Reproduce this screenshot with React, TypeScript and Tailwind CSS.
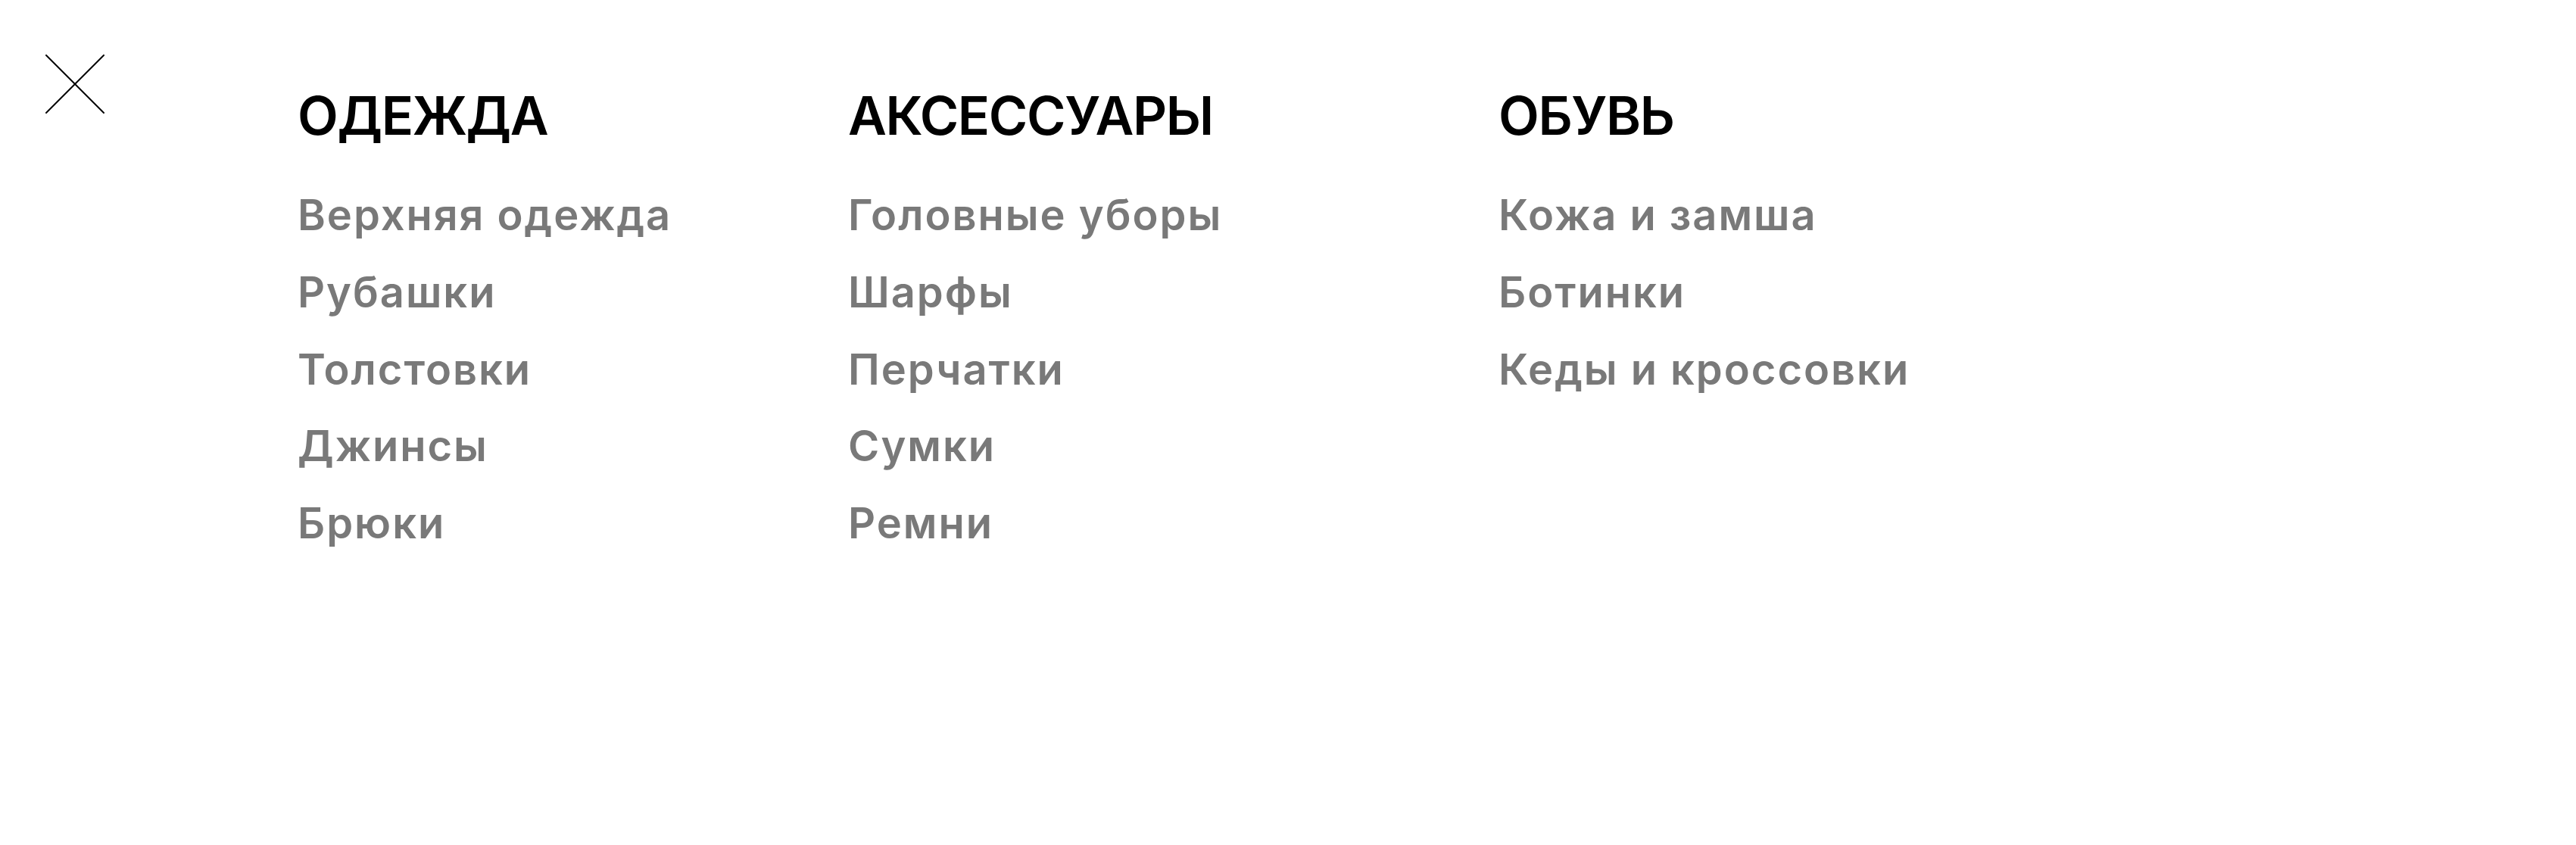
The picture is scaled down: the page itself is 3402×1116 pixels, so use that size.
import React from "react";

type Column = { title: string; items: string[]; width: string };

const columns: Column[] = [
  {
    title: "ОДЕЖДА",
    items: ["Верхняя одежда", "Рубашки", "Толстовки", "Джинсы", "Брюки"],
    width: "w-[727px]",
  },
  {
    title: "АКСЕССУАРЫ",
    items: ["Головные уборы", "Шарфы", "Перчатки", "Сумки", "Ремни"],
    width: "w-[859px]",
  },
  {
    title: "ОБУВЬ",
    items: ["Кожа и замша", "Ботинки", "Кеды и кроссовки"],
    width: "w-[600px]",
  },
];

function CloseIcon() {
  return (
    <svg width="78" height="78" viewBox="0 0 78 78" fill="none" stroke="#000" strokeWidth="2" strokeLinecap="round">
      <line x1="1" y1="1" x2="77" y2="77" />
      <line x1="77" y1="1" x2="1" y2="77" />
    </svg>
  );
}

export default function App() {
  return (
    <div className="min-h-screen bg-white pt-[72px] pl-[60px] flex items-start font-['Inter',sans-serif]">
      <button type="button" aria-label="Закрыть" className="shrink-0">
        <CloseIcon />
      </button>
      <nav className="ml-[255px] mt-[46px] flex">
        {columns.map((col) => (
          <div key={col.title} className={col.width}>
            <h2 className="text-[70px] leading-[70px] font-semibold tracking-[-0.02em] text-black">{col.title}</h2>
            <ul className="mt-[46px]">
              {col.items.map((item) => (
                <li key={item}>
                  <a href="#" className="text-[56px] leading-[101.75px] font-semibold tracking-[0.035em] text-[#797979]">
                    {item}
                  </a>
                </li>
              ))}
            </ul>
          </div>
        ))}
      </nav>
    </div>
  );
}
